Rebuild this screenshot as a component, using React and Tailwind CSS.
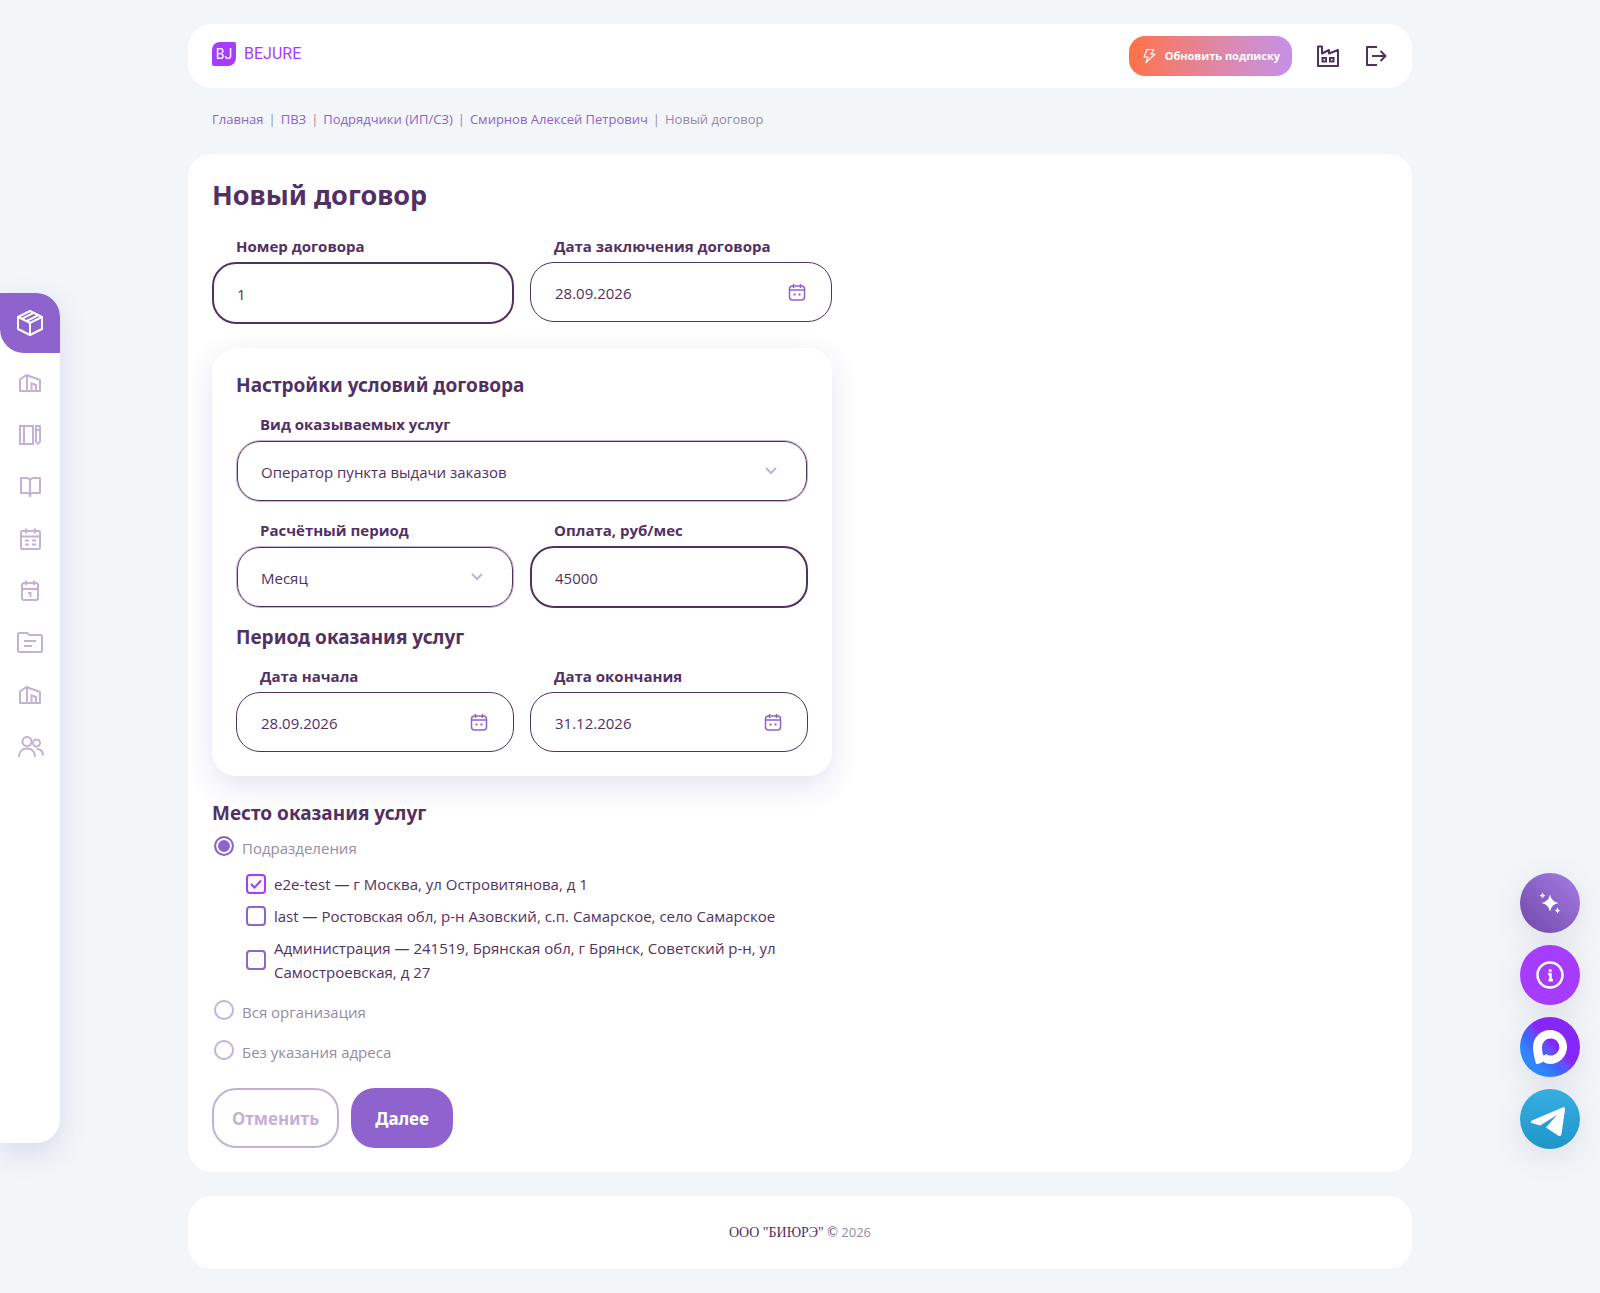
import { useState } from "react";

const STROKE = {
  fill: "none",
  stroke: "currentColor",
  strokeWidth: 2,
};

const Icon = ({ size = 28, className = "", children }) => (
  <svg width={size} height={size} viewBox={`0 0 ${size} ${size}`} className={className} aria-hidden="true" {...STROKE}>
    {children}
  </svg>
);

const BoxIcon = () => (
  <Icon>
    <path d="M14 2 26 8V20L14 26 2 20V8Z" strokeLinejoin="round" />
    <path d="M2 8 14 14 26 8M14 14V26M5.600 9.800 17.600 3.800M10.400 12.200 22.400 6.200" />
  </Icon>
);

const WarehouseIcon = () => (
  <Icon>
    <path d="M4 22V10.500L10.500 6 24 11V22Z" strokeLinejoin="round" />
    <path d="M11 6V22M15.500 22V14.500L20 16V22" />
  </Icon>
);

const NotebookIcon = () => (
  <Icon>
    <path d="M4 5H17V23H4ZM8 5V23" />
    <path d="M20 5H24V20.500L22 23 20 20.500ZM20 9H24" strokeLinejoin="round" />
  </Icon>
);

const BookIcon = () => (
  <Icon>
    <path d="M14 7.500C13.300 6 12.500 5 11 5H5V20H11.500C13 20 14 21 14 22.500C14 21 15 20 16.500 20H24V5H17C15.500 5 14.700 6 14 7.500ZM14 7V24" strokeLinejoin="round" />
  </Icon>
);

const CalendarIcon = () => (
  <Icon>
    <rect x="5" y="6" width="19" height="18" rx="1.500" />
    <path d="M5 11.500H24M10 3.500V8.500M19 3.500V8.500M9 15.500H13M16 15.500H20M9 19.500H13M16 19.500H20" />
  </Icon>
);

const CalendarDayIcon = () => (
  <Icon>
    <rect x="6" y="6" width="16" height="17" rx="2" />
    <path d="M6 12H22M10 3.500V8M18 3.500V8M12 16H14.500V20" />
  </Icon>
);

const FolderIcon = () => (
  <Icon>
    <path d="M2 5.500Q2 4 3.500 4H11L13.500 6H24.500Q26 6 26 7.500V21.500Q26 23 24.500 23H3.500Q2 23 2 21.500Z" />
    <path d="M8 12H20M8 17H16" />
  </Icon>
);

const UsersIcon = () => (
  <Icon>
    <circle cx="11" cy="8.500" r="4.500" />
    <path d="M3 24C3 18.500 6.500 15.500 11 15.500S19 18.500 19 24" />
    <circle cx="20.500" cy="10" r="3.500" />
    <path d="M20.500 16C24.500 16 27 18.500 27 22.500" />
  </Icon>
);

const DateIcon = () => (
  <Icon size={20}>
    <g strokeWidth="1.500">
      <rect x="2.500" y="4" width="15" height="14" rx="3" />
      <path d="M2.500 8H17.500M6.500 2V6M13.500 2V6" />
    </g>
    <path d="M6.500 12.500H8.500M11.500 12.500H13.500" />
  </Icon>
);

const FactoryIcon = () => (
  <Icon size={24}>
    <path d="M2 22V2.500H6V9.500L13 6V9.500L22 6V22Z" strokeLinejoin="round" />
    <path d="M6.500 14H10V17.500H6.500ZM14 14H17.500V17.500H14Z" />
  </Icon>
);

const ExitIcon = () => (
  <Icon size={24}>
    <path d="M13 3H3V21H13M8 12H21.500M16.500 7 21.500 12 16.500 17" strokeLinejoin="round" />
  </Icon>
);

const BoltIcon = () => (
  <Icon size={16}>
    <path d="M6 1.500H13L10 6H14L5 14.500 7 9H3Z" strokeWidth="1.200" strokeLinejoin="round" />
  </Icon>
);

const navItems = [
  { title: "Склад", icon: WarehouseIcon },
  { title: "Журнал", icon: NotebookIcon },
  { title: "Справочник", icon: BookIcon },
  { title: "График", icon: CalendarIcon },
  { title: "Календарь", icon: CalendarDayIcon },
  { title: "Документы", icon: FolderIcon },
  { title: "Подразделения", icon: WarehouseIcon },
  { title: "Сотрудники", icon: UsersIcon },
];

const crumbs = ["Главная", "ПВЗ", "Подрядчики (ИП/СЗ)", "Смирнов Алексей Петрович"];

const departments = [
  { id: "dep-1", name: "e2e-test — г Москва, ул Островитянова, д 1" },
  { id: "dep-2", name: "last — Ростовская обл, р-н Азовский, с.п. Самарское, село Самарское" },
  { id: "dep-3", name: "Администрация — 241519, Брянская обл, г Брянск, Советский р-н, ул Самостроевская, д 27" },
];

const Sidebar = () => (
  <aside className="w-20 shrink-0 flex pt-[293px] pb-[150px]">
    <nav className="w-[60px] bg-white rounded-r-3xl shadow-[0_10px_28px_rgba(80,80,180,0.16)] text-[#c3b1d6]">
      <a href="#pvz" aria-label="ПВЗ" className="flex items-center justify-center h-[60px] bg-[#8e63ce] text-white rounded-tr-3xl rounded-bl-3xl">
        <BoxIcon />
      </a>
      <ul className="pt-1">
        {navItems.map(({ title, icon: NavIcon }) => (
          <li key={title}>
            <a href="#nav" aria-label={title} className="flex items-center justify-center h-[52px]">
              <NavIcon />
            </a>
          </li>
        ))}
      </ul>
    </nav>
  </aside>
);

const Header = () => (
  <header className="flex items-center justify-between h-16 px-6 bg-white rounded-3xl">
    <a href="#home" className="flex items-center gap-2 pb-1 text-[#a63cfd]">
      <span className="flex items-center justify-center size-6 rounded-tl-lg rounded-br-lg rounded-tr-xs rounded-bl-xs bg-[#a63cfd] text-white text-sm font-[Roboto,sans-serif]">BJ</span>
      <span className="text-base leading-6 font-[Roboto,sans-serif]">BEJURE</span>
    </a>
    <div className="flex items-center gap-6 text-[#533063]">
      <button className="flex items-center gap-2 h-10 px-3 rounded-2xl bg-linear-to-r from-[#ff7043] to-[#c490e8] text-white text-[11px] font-bold">
        <BoltIcon />
        Обновить подписку
      </button>
      <button aria-label="Организация"><FactoryIcon /></button>
      <button aria-label="Выйти"><ExitIcon /></button>
    </div>
  </header>
);

const Heading = ({ className = "mb-[14px]", children }) => (
  <h2 className={`${className} text-[19px] leading-[26px] font-bold font-['Noto_Sans',sans-serif]`}>{children}</h2>
);

const Field = ({ id, label, children }) => (
  <div className="flex-1 min-w-0">
    <label htmlFor={id} className="block pl-6 mb-1 leading-6 font-bold">{label}</label>
    {children}
  </div>
);

const TextField = ({ id, label, value }) => (
  <Field id={id} label={label}>
    <input id={id} defaultValue={value} className="block w-full h-[62px] px-[23px] pt-[2px] rounded-3xl border-2 border-[#533063] bg-white outline-none" />
  </Field>
);

const DateField = ({ id, label, value }) => (
  <Field id={id} label={label}>
    <div className="flex items-center h-[60px] px-6 rounded-3xl border border-[#533063] bg-white">
      <input id={id} defaultValue={value} className="flex-1 min-w-0 pt-[2px] outline-none" />
      <button type="button" aria-label="Открыть календарь" className="text-[#8e63ce]"><DateIcon /></button>
    </div>
  </Field>
);

const SelectField = ({ id, label, value }) => (
  <Field id={id} label={label}>
    <div className="grid items-center rounded-3xl border border-[#c3b1d6]">
      <select id={id} className="col-start-1 row-start-1 w-full h-[60px] px-[23px] pt-[2px] rounded-[23px] border border-[#533063] bg-white appearance-none outline-none">
        <option>{value}</option>
      </select>
      <svg width="12" height="8" viewBox="0 0 12 8" className="col-start-1 row-start-1 justify-self-end mr-[30px] text-[#c3b1d6] pointer-events-none" {...STROKE}>
        <path d="M1 1 6 6 11 1" />
      </svg>
    </div>
  </Field>
);

const PlaceRadio = ({ value, label, place, setPlace }) => (
  <label className="flex items-start gap-2 pl-[2px] h-6 leading-6 text-[#968ba3]">
    <input
      type="radio"
      name="place"
      checked={place === value}
      onChange={() => setPlace(value)}
      className="appearance-none size-5 rounded-full border-2 border-[#c3b1d6] checked:border-[#8e63ce] checked:bg-[#8e63ce] checked:shadow-[inset_0_0_0_2px_#fff]"
    />
    {label}
  </label>
);

const Floats = () => (
  <div className="w-20 shrink-0 flex flex-col justify-end gap-3 pb-36">
    <button aria-label="Ассистент" className="size-[60px] flex items-center justify-center rounded-full bg-linear-to-tr from-[#6f48a8] to-[#a87de6] shadow-[0_8px_32px_rgba(80,50,99,0.12)]">
      <svg width="24" height="24" viewBox="0 0 24 24" fill="#fff">
        <path d="M12 3.500Q13.400 10.600 20.500 12 13.400 13.400 12 20.500 10.600 13.400 3.500 12 10.600 10.600 12 3.500ZM4.500 1.500Q5 4 7.500 4.500 5 5 4.500 7.500 4 5 1.500 4.500 4 4 4.500 1.500ZM19.500 16.500Q20 19 22.500 19.500 20 20 19.500 22.500 19 20 16.500 19.500 19 19 19.500 16.500Z" />
      </svg>
    </button>
    <button aria-label="Справка" className="size-[60px] flex items-center justify-center rounded-full bg-[#a63cfd] text-white shadow-[0_8px_32px_rgba(80,50,99,0.12)]">
      <Icon>
        <circle cx="14" cy="14" r="12.500" strokeWidth="2.500" />
        <path d="M12 13H14.500V19M12.500 19.200H17" strokeWidth="2.500" />
        <circle cx="14.200" cy="9.500" r="1.600" fill="currentColor" stroke="none" />
      </Icon>
    </button>
    <a href="#max" aria-label="MAX" className="size-[60px] flex items-center justify-center rounded-full bg-linear-to-tr from-[#2f86ff] from-25% via-[#3d62fd] via-40% to-[#8427f8] to-55% shadow-[0_8px_32px_rgba(80,50,99,0.12)]">
      <svg width="36" height="36" viewBox="0 0 36 36" fill="#fff">
        <path fillRule="evenodd" d="M18 1A17 17 0 0 1 18 35C15 35 13 34 11 32.500 9.500 34 6 35.500 4 35 3 30 1 25 1 18A17 17 0 0 1 18 1ZM18.500 9.500A8.500 8.500 0 0 0 10 18C10 21 10.500 25 11.500 26.500 12.500 26.500 13.500 25.500 14 25A8.500 8.500 0 1 0 18.500 9.500Z" />
      </svg>
    </a>
    <a href="#telegram" aria-label="Telegram" className="size-[60px] flex items-center justify-center rounded-full bg-linear-to-b from-[#37aee2] to-[#1e96c8] shadow-[0_8px_32px_rgba(80,50,99,0.12)]">
      <svg width="60" height="60" viewBox="0 0 60 60" fill="#fff">
        <path d="M12 31.500 42.500 18.500Q45.500 17.500 45 20.500L41.500 45Q41 48 38 46.500L26 38.500 37 26 20 36.500 11.500 34Q9.500 33 12 31.500Z" />
      </svg>
    </a>
  </div>
);

const App = () => {
  const [place, setPlace] = useState("departments");
  const [checked, setChecked] = useState(["dep-1"]);

  const toggle = (id) => {
    setChecked(checked.includes(id) ? checked.filter(c => c !== id) : [...checked, id]);
  };

  return (
    <div className="flex min-h-screen bg-[#f2f6f9] text-[#533063] text-[15px] font-['Open_Sans',sans-serif]">
      <Sidebar />
      <div className="flex-1 min-w-0 py-6">
        <div className="max-w-[1224px] mx-auto">
          <Header />

          <nav className="flex gap-[5px] px-6 pt-[19px] pb-[23px] text-[13px] leading-6 text-[#968ba3]">
            {crumbs.map(c => (
              <span key={c} className="flex gap-[5px]">
                <a href="#crumb" className="text-[#8e63ce]">{c}</a>
                <span>|</span>
              </span>
            ))}
            <span>Новый договор</span>
          </nav>

          <main className="p-6 bg-white rounded-3xl">
            <form className="max-w-[620px]" onSubmit={e => e.preventDefault()}>
              <h1 className="mb-[22px] text-[27px] leading-[34px] font-bold font-['Noto_Sans',sans-serif]">Новый договор</h1>
              <div className="flex gap-4">
                <TextField id="number" label="Номер договора" value="1" />
                <DateField id="date" label="Дата заключения договора" value="28.09.2026" />
              </div>

              <section className="my-6 p-6 rounded-3xl bg-white shadow-[0_10px_28px_rgba(80,80,180,0.16)]">
                <Heading>Настройки условий договора</Heading>
                <SelectField id="service" label="Вид оказываемых услуг" value="Оператор пункта выдачи заказов" />
                <div className="flex gap-4 my-4">
                  <SelectField id="period" label="Расчётный период" value="Месяц" />
                  <TextField id="pay" label="Оплата, руб/мес" value="45000" />
                </div>
                <Heading>Период оказания услуг</Heading>
                <div className="flex gap-4">
                  <DateField id="start" label="Дата начала" value="28.09.2026" />
                  <DateField id="end" label="Дата окончания" value="31.12.2026" />
                </div>
              </section>

              <Heading className="mb-[10px]">Место оказания услуг</Heading>
              <PlaceRadio value="departments" label="Подразделения" place={place} setPlace={setPlace} />
              <ul className="flex flex-col gap-2 mt-3 mb-4 pl-[34px]">
                {departments.map(d => (
                  <li key={d.id}>
                    <label className="flex items-center gap-2 leading-6">
                      <span className="grid shrink-0">
                        <input
                          type="checkbox"
                          checked={checked.includes(d.id)}
                          onChange={() => toggle(d.id)}
                          className="col-start-1 row-start-1 appearance-none size-5 rounded-sm border-2 border-[#8e63ce] checked:border-[#a63cfd]"
                        />
                        {checked.includes(d.id) && (
                          <svg width="20" height="20" viewBox="0 0 20 20" className="col-start-1 row-start-1 text-[#a63cfd] pointer-events-none" {...STROKE}>
                            <path d="M5 10 8.500 13.500 15 6.500" />
                          </svg>
                        )}
                      </span>
                      {d.name}
                    </label>
                  </li>
                ))}
              </ul>
              <div className="flex flex-col gap-4">
                <PlaceRadio value="org" label="Вся организация" place={place} setPlace={setPlace} />
                <PlaceRadio value="none" label="Без указания адреса" place={place} setPlace={setPlace} />
              </div>

              <div className="flex gap-3 mt-6 text-[17px] font-bold font-['Noto_Sans',sans-serif]">
                <button type="button" className="h-[60px] px-[18px] pt-[2px] rounded-3xl border-2 border-[#c3b1d6] text-[#c3b1d6]">Отменить</button>
                <button type="submit" className="h-[60px] px-6 pt-[2px] rounded-3xl bg-[#8e63ce] text-white">Далее</button>
              </div>
            </form>
          </main>

          <footer className="mt-6 py-6 bg-white rounded-3xl text-center text-[13px] leading-[25px] text-[#968ba3]">
            <span className="text-sm text-[#533063] font-['Liberation_Serif',serif]">ООО "БИЮРЭ" ©</span> 2026
          </footer>
        </div>
      </div>
      <Floats />
    </div>
  );
};

export default App;
